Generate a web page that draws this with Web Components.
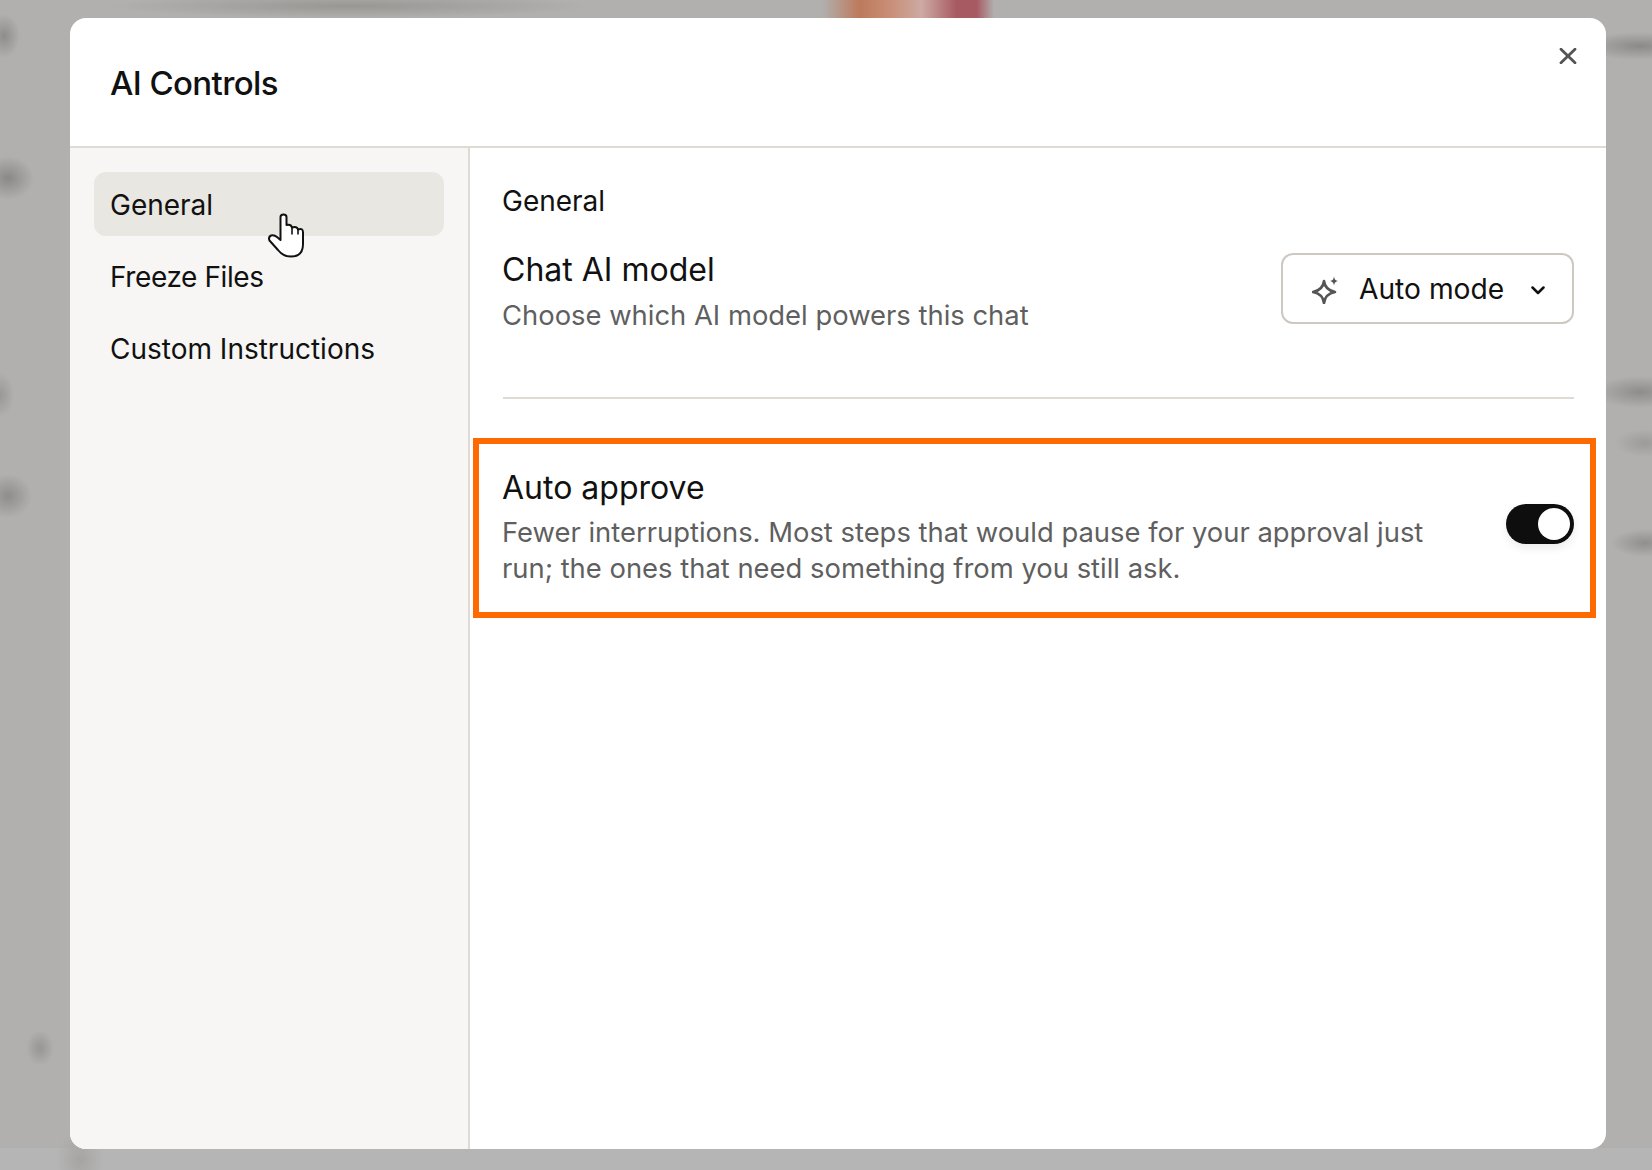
<!DOCTYPE html>
<html>
<head>
<meta charset="utf-8">
<title>AI Controls</title>
<style>
  html, body { margin: 0; height: 100%; }
  body { font-family: Inter, "Liberation Sans", sans-serif; color: #111; }
</style>
</head>
<body>
<ai-backdrop>
  <ai-modal heading="AI Controls">
    <ai-nav-item slot="nav" active>General<hand-cursor></hand-cursor></ai-nav-item>
    <ai-nav-item slot="nav" style="letter-spacing: -0.4px">Freeze Files</ai-nav-item>
    <ai-nav-item slot="nav">Custom Instructions</ai-nav-item>

    <section-title>General</section-title>
    <setting-row name="Chat AI model">
      Choose which AI model powers this chat
      <model-select slot="control">Auto mode</model-select>
    </setting-row>
    <setting-row name="Auto approve" highlighted>
      Fewer interruptions. Most steps that would pause for your approval just run; the ones that need something from you still ask.
      <toggle-switch slot="control"></toggle-switch>
    </setting-row>
  </ai-modal>
</ai-backdrop>

<script>
// every element gets its template string, cloned through this helper
function shadow(el, html) {
  const t = document.createElement("template");
  t.innerHTML = html;
  el.attachShadow({ mode: "open" }).append(t.content.cloneNode(true));
}

class AiBackdrop extends HTMLElement {
  constructor() {
    super();
    shadow(this, `
      <style>
        :host {
          display: block;
          box-sizing: border-box;
          width: 1652px;
          height: 1170px;
          overflow: hidden;
          padding: 18px 46px 21px 70px;
          background-color: #b1b0ae;
          background-repeat: no-repeat;
          background-image:
            linear-gradient(90deg, transparent, #bd7a5c 22%, #c98f78 40%, #cdaaa4 58%, #a85a62 78%, #a85a62 90%, transparent),
            radial-gradient(ellipse 240px 12px at 350px 6px, #989794, transparent),
            radial-gradient(ellipse 16px 22px at 4px 36px, #8e8d8b, transparent),
            radial-gradient(ellipse 26px 22px at 8px 178px, #8a8987, transparent),
            radial-gradient(ellipse 14px 22px at 0 395px, #999896, transparent),
            radial-gradient(ellipse 24px 22px at 8px 496px, #8e8d8b, transparent),
            radial-gradient(ellipse 14px 18px at 40px 1048px, #979695, transparent),
            radial-gradient(ellipse 24px 30px at 80px 1160px, #a5a4a2, transparent),
            radial-gradient(ellipse 60px 14px at 1640px 46px, #8b8a88, transparent),
            radial-gradient(ellipse 46px 16px at 1640px 392px, #8e8d8b, transparent),
            radial-gradient(ellipse 30px 14px at 1645px 443px, #9c9b99, transparent),
            radial-gradient(ellipse 34px 14px at 1645px 543px, #908f8d, transparent),
            linear-gradient(#b5b5b5, #b5b5b5);
          background-size: 172px 20px, auto, auto, auto, auto, auto, auto, auto, auto, auto, auto, auto, 100% 22px;
          background-position: 822px 0, 0 0, 0 0, 0 0, 0 0, 0 0, 0 0, 0 0, 0 0, 0 0, 0 0, 0 0, 0 100%;
        }
      </style>
      <slot></slot>
    `);
  }
}

class AiModal extends HTMLElement {
  constructor() {
    super();
    shadow(this, `
      <style>
        :host {
          display: grid;
          grid-template-rows: 130px 1fr;
          height: 100%;
          background: #fff;
          border-radius: 16px;
          overflow: hidden;
        }
        header {
          display: flex;
          justify-content: space-between;
          padding: 0 29px 0 40px;
          border-bottom: 2px solid #dfdbd4;
        }
        h1 {
          margin: 0;
          padding-top: 46px;
          font-size: 33px;
          line-height: 38px;
          font-weight: 500;
          letter-spacing: -0.6px;
        }
        .close { margin-top: 30px; width: 18px; height: 16px; }
        .body { display: grid; grid-template-columns: 400px 1fr; min-height: 0; }
        nav {
          display: flex;
          flex-direction: column;
          gap: 8px;
          padding: 24px 24px;
          background: #f7f6f4;
          border-right: 2px solid #dfdbd4;
        }
        main { padding: 37px 32px 0 33px; }
      </style>
      <header>
        <h1></h1>
        <svg class="close" viewBox="0 0 18 16" fill="none" stroke="#555" stroke-width="2.8" stroke-linecap="round">
          <path d="M2 1.2 16 14.8M16 1.2 2 14.8"/>
        </svg>
      </header>
      <div class="body">
        <nav><slot name="nav"></slot></nav>
        <main><slot></slot></main>
      </div>
    `);
    this.shadowRoot.querySelector("h1").textContent = this.getAttribute("heading");
  }
}

class AiNavItem extends HTMLElement {
  constructor() {
    super();
    shadow(this, `
      <style>
        :host {
          display: block;
          position: relative;
          height: 64px;
          padding: 0 16px;
          border-radius: 12px;
          font-size: 28px;
          line-height: 66px;
        }
        :host([active]) { background: #e9e7e1; }
      </style>
      <slot></slot>
    `);
  }
}

class HandCursor extends HTMLElement {
  constructor() {
    super();
    shadow(this, `
      <style>
        :host { position: absolute; left: 156px; top: 28px; width: 70px; height: 70px; line-height: 0; }
      </style>
      <svg width="70" height="70" viewBox="0 0 70 70" fill="#fff" stroke="#111" stroke-width="2" stroke-linejoin="round" stroke-linecap="round">
        <path d="M30.5 40V17Q30.5 14.500 33.500 14.500Q36.500 14.500 36.500 17V25Q41 24 42 27.500Q47 26 48 29.500Q53 27.500 53 32.500V44Q53 56.500 41 56.500Q33 56.500 28 50L19.500 40.500Q18 37 21 35.500Q24 34.500 27 37Z"/>
        <path d="M42 27.500V34M48 29.500V34" fill="none" stroke-width="1.6"/>
      </svg>
    `);
  }
}

class SectionTitle extends HTMLElement {
  constructor() {
    super();
    shadow(this, `
      <style>
        :host { display: block; font-size: 28px; line-height: 32px; margin-left: -1px; }
      </style>
      <slot></slot>
    `);
  }
}

class SettingRow extends HTMLElement {
  constructor() {
    super();
    shadow(this, `
      <style>
        :host {
          display: flex;
          justify-content: space-between;
          box-sizing: border-box;
          gap: 60px;
          padding: 33px 0 63px;
          border-bottom: 2px solid #dfdbd4;
        }
        :host(:not([highlighted])) .copy { margin-left: -1px; }
        :host([highlighted]) {
          height: 180px;
          margin: 39px -22px 0 -30px;
          padding: 24px 16px 0 23px;
          border: 6px solid #ff6a00;
          align-items: flex-start;
        }
        .name { font-size: 32px; line-height: 40px; }
        .note { margin-top: 7px; font-size: 27.4px; line-height: 36.5px; color: #5f5f5f; }
        :host([highlighted]) .note { margin-top: 6px; }
        .control { flex: none; }
        :host([highlighted]) .control { margin-top: 36px; }
      </style>
      <div class="copy">
        <div class="name"></div>
        <div class="note"><slot></slot></div>
      </div>
      <div class="control"><slot name="control"></slot></div>
    `);
    this.shadowRoot.querySelector(".name").textContent = this.getAttribute("name");
  }
}

class ModelSelect extends HTMLElement {
  constructor() {
    super();
    shadow(this, `
      <style>
        :host {
          display: flex;
          align-items: center;
          box-sizing: border-box;
          width: 293px;
          height: 71px;
          margin-top: 3px;
          padding-left: 29px;
          border: 2px solid #cdc8c0;
          border-radius: 12px;
          font-size: 28.2px;
        }
        .text { margin-left: 21px; flex: none; }
        .chev { margin: 3px 0 0 27px; }
      </style>
      <svg width="26" height="30" viewBox="0 0 26 30" fill="none" stroke="#555" stroke-width="2.6" stroke-linejoin="round">
        <path d="M12 7Q13 16 23 18Q13 20 12 29Q11 20 1 18Q11 16 12 7Z"/>
        <path d="M22 2.500Q22.400 6.500 26 7Q22.400 7.500 22 11.500Q21.600 7.500 18 7Q21.600 6.500 22 2.500Z" fill="#555" stroke="none"/>
      </svg>
      <span class="text"><slot></slot></span>
      <svg class="chev" width="14" height="9" viewBox="0 0 14 9" fill="none" stroke="#111" stroke-width="2.5" stroke-linecap="round" stroke-linejoin="round">
        <path d="M1.500 1.500 7 7l5.500-5.500"/>
      </svg>
    `);
  }
}

class ToggleSwitch extends HTMLElement {
  constructor() {
    super();
    shadow(this, `
      <style>
        :host {
          display: flex;
          justify-content: flex-end;
          align-items: center;
          box-sizing: border-box;
          width: 68px;
          height: 40px;
          padding-right: 4px;
          border-radius: 20px;
          background: #0e0e0e;
          box-shadow: 0 4px 10px rgba(0, 0, 0, .08);
        }
        i { width: 32px; height: 32px; border-radius: 50%; background: #fff; }
      </style>
      <i></i>
    `);
  }
}

customElements.define("ai-backdrop", AiBackdrop);
customElements.define("ai-modal", AiModal);
customElements.define("ai-nav-item", AiNavItem);
customElements.define("hand-cursor", HandCursor);
customElements.define("section-title", SectionTitle);
customElements.define("setting-row", SettingRow);
customElements.define("model-select", ModelSelect);
customElements.define("toggle-switch", ToggleSwitch);
</script>
</body>
</html>
